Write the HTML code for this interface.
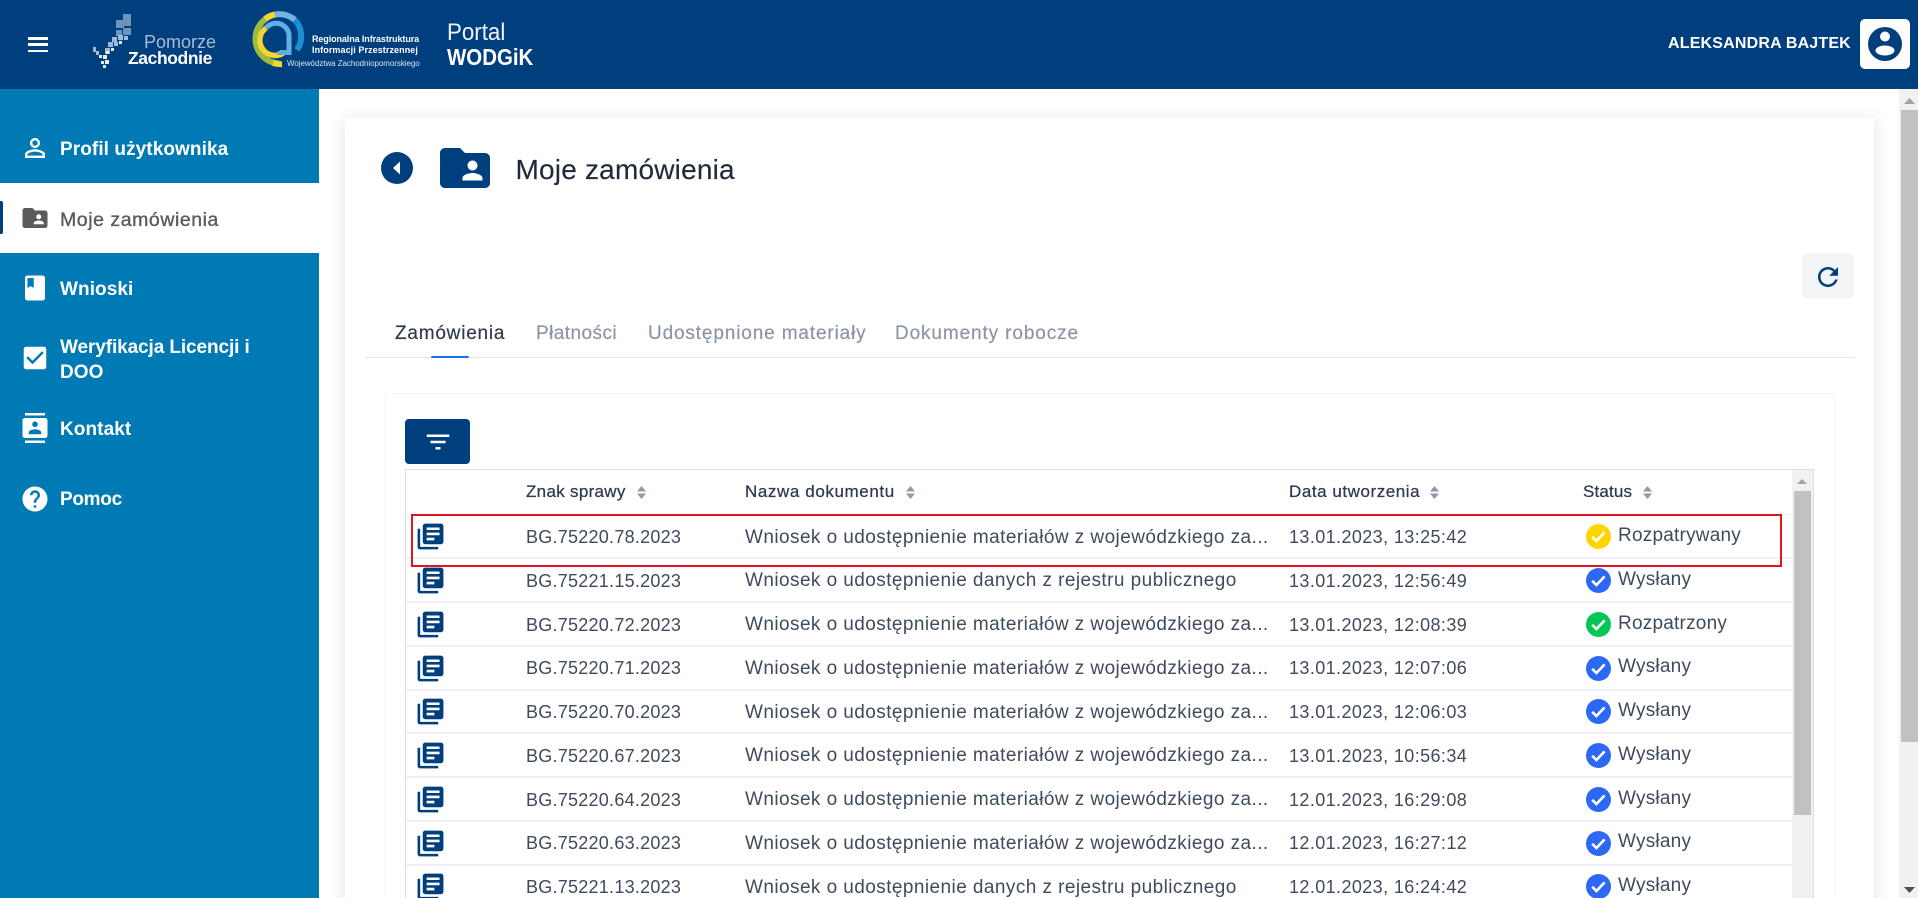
<!DOCTYPE html>
<html lang="pl"><head><meta charset="utf-8"><title>Moje zamówienia</title>
<style>
html,body{margin:0;padding:0;width:1918px;height:898px;overflow:hidden;background:#fff;font-family:"Liberation Sans",sans-serif}
#w{position:relative;width:1918px;height:898px;overflow:hidden;background:#fff}
.a{position:absolute;white-space:nowrap}
svg.a{display:block;overflow:visible}
.nav{left:60px;font-size:19px;font-weight:bold;color:#fff;line-height:24px;letter-spacing:.08px;margin-top:1.2px}
.tab{top:321.5px;font-size:19px;line-height:24px;color:#8b95a5;-webkit-text-stroke:.2px}
.th{top:481px;font-size:17px;line-height:22px;color:#2f3a4c;-webkit-text-stroke:.25px;letter-spacing:.3px}
.td{font-size:18px;line-height:24px;color:#3f4b5d}
.c1{left:526px;letter-spacing:.25px}
.c2{left:745px;letter-spacing:.43px;font-size:19px;margin-top:.5px}
.c3{left:1289px;letter-spacing:.4px}
.c4{left:1618px;letter-spacing:.22px;font-size:19px;margin-top:1px}
.ln{left:406px;width:1386px;height:2px;background:#eef0f5}
</style></head><body><div id="w">
<svg width="0" height="0" style="position:absolute"><defs>
<path id="lib" d="M4 6H2v14c0 1.1.9 2 2 2h14v-2H4V6zm16-4H8c-1.1 0-2 .9-2 2v12c0 1.1.9 2 2 2h12c1.1 0 2-.9 2-2V4c0-1.1-.9-2-2-2zm-1 9H9V9h10v2zm-4 4H9v-2h6v2zm4-8H9V5h10v2z"/>
<g id="sort"><path d="M0 5.5L4.5 0 9 5.5z M0 7.5h9L4.5 13z"/></g>
<g id="ok"><path d="M6.2 12.8l4.2 4.2 8.2-8.6" fill="none" stroke="#fff" stroke-width="2.6"/></g>
</defs></svg>

<!-- header -->
<div class="a" style="left:0;top:0;width:1918px;height:89px;background:#003f7d"></div>
<div class="a" style="left:28px;top:37px;width:20px;height:2.6px;background:#fff"></div>
<div class="a" style="left:28px;top:43px;width:20px;height:2.6px;background:#fff"></div>
<div class="a" style="left:28px;top:49.5px;width:20px;height:2.6px;background:#fff"></div>

<!-- Pomorze logo -->
<svg class="a" style="left:92px;top:11px" width="50" height="60" viewBox="0 0 50 60">
<g fill="#6f94bb"><rect x="24" y="9" width="8" height="8"/><rect x="31" y="3" width="8" height="12"/><rect x="31" y="17" width="8" height="7"/><rect x="24" y="19" width="6" height="6"/></g>
<g fill="#9fbad6"><rect x="20" y="26" width="5" height="5"/><rect x="26" y="24" width="5" height="5"/><rect x="32" y="25" width="4" height="4"/><rect x="16" y="31" width="5" height="5"/><rect x="22" y="31" width="4" height="4"/><rect x="13" y="37" width="5" height="6"/><rect x="1" y="36" width="3" height="5"/><rect x="4" y="40" width="3" height="4"/></g>
<g fill="#e6eef6"><rect x="11" y="44" width="4" height="4"/><rect x="14" y="40" width="3" height="3"/><rect x="19" y="37" width="3" height="3"/><rect x="7" y="44" width="3" height="3"/><rect x="13" y="49" width="4" height="4"/><rect x="9" y="50" width="3" height="3"/><rect x="11" y="54" width="3" height="3"/><rect x="27" y="30" width="3" height="3"/></g>
</svg>
<div class="a" style="left:144px;top:31px;font-size:18px;line-height:22px;color:#a8bcd2">Pomorze</div>
<div class="a" style="left:128px;top:47.7px;font-size:17.5px;line-height:21px;font-weight:bold;color:#fff;letter-spacing:-.4px">Zachodnie</div>

<!-- RIIP logo -->
<svg class="a" style="left:247.5px;top:8px" width="60" height="64" viewBox="0 0 60 64" fill="none">
<path d="M31 55.5A24.5 24.5 0 0 1 7.5 31 24.5 24.5 0 0 1 19 10" stroke="#9dbb3f" stroke-width="6"/>
<path d="M25 55A24.5 24.5 0 0 0 34 56" stroke="#f3d52f" stroke-width="6"/>
<path d="M17 11A24.5 24.5 0 0 1 27 6.5" stroke="#f3d52f" stroke-width="6"/>
<path d="M27 6.5A24.5 24.5 0 0 1 47 12" stroke="#6fb6e6" stroke-width="6"/>
<path d="M47 12A24.5 24.5 0 0 1 49 42" stroke="#1b8fd2" stroke-width="6"/>
<path d="M36 44.5A13 13 0 0 1 18 20" stroke="#f3d52f" stroke-width="5.5"/>
<path d="M18 20A13 13 0 0 1 41 27V44.5H32V43" stroke="#5fb0e6" stroke-width="5"/>
</svg>
<div class="a" style="left:312px;top:34px;font-size:9px;line-height:11px;font-weight:bold;color:#fff;letter-spacing:-.1px">Regionalna Infrastruktura</div>
<div class="a" style="left:312px;top:44.5px;font-size:9px;line-height:11px;font-weight:bold;color:#fff;letter-spacing:.08px">Informacji Przestrzennej</div>
<div class="a" style="left:287px;top:59px;font-size:8px;line-height:10px;color:#d5e3ef;letter-spacing:-.06px">Województwa Zachodniopomorskiego</div>
<div class="a" style="left:447px;top:20px;font-size:24px;line-height:26px;color:#f0f4f8;transform:scaleX(.93);transform-origin:0 0">Portal</div>
<div class="a" style="left:447px;top:43.5px;font-size:23.5px;line-height:26px;font-weight:bold;color:#fff;transform:scaleX(.87);transform-origin:0 0">WODGiK</div>

<div class="a" style="left:1668px;top:33px;font-size:16px;line-height:22px;font-weight:bold;color:#fff;letter-spacing:.18px">ALEKSANDRA BAJTEK</div>
<div class="a" style="left:1860px;top:19px;width:50px;height:50px;border-radius:5px;background:#fff"></div>
<svg class="a" style="left:1868px;top:27px" width="34" height="34" viewBox="0 0 34 34"><circle cx="17" cy="17" r="17" fill="#003f7d"/><circle cx="17" cy="9.5" r="5" fill="#fff"/><ellipse cx="17" cy="23.5" rx="9.5" ry="5" fill="#fff"/></svg>

<!-- sidebar -->
<div class="a" style="left:0;top:89px;width:319px;height:809px;background:#007ab5"></div>
<div class="a" style="left:0;top:183px;width:319px;height:70px;background:#fff"></div>
<div class="a" style="left:0;top:201px;width:3px;height:33px;background:#003f7d;border-radius:0 2px 2px 0"></div>

<svg class="a" style="left:20px;top:133px" width="30" height="30" viewBox="0 0 24 24" fill="#fff"><path d="M12 5.900c1.160 0 2.100.94 2.100 2.100s-.94 2.100-2.100 2.100S9.900 9.160 9.900 8s.94-2.100 2.100-2.100m0 9c2.970 0 6.100 1.460 6.100 2.100v1.100H5.900V17c0-.64 3.130-2.100 6.100-2.100M12 4C9.790 4 8 5.790 8 8s1.790 4 4 4 4-1.790 4-4-1.790-4-4-4zm0 9c-2.670 0-8 1.340-8 4v3h16v-3c0-2.660-5.330-4-8-4z"/></svg>
<div class="a nav" style="top:137px">Profil użytkownika</div>

<svg class="a" style="left:19.5px;top:203px" width="30" height="30" viewBox="0 0 24 24" fill="#5a5a5a"><path d="M20 6h-8l-2-2H4c-1.100 0-1.990.9-1.990 2L2 18c0 1.100.9 2 2 2h16c1.100 0 2-.9 2-2V8c0-1.100-.9-2-2-2zm-5 3c1.100 0 2 .9 2 2s-.9 2-2 2-2-.9-2-2 .9-2 2-2zm4 8h-8v-1c0-1.330 2.670-2 4-2s4 .67 4 2v1z"/></svg>
<div class="a nav" style="top:207px;color:#5a5a5a;font-weight:normal;font-size:19.5px;-webkit-text-stroke:.35px #5a5a5a;letter-spacing:.55px">Moje zamówienia</div>

<svg class="a" style="left:20px;top:272.5px" width="30" height="30" viewBox="0 0 24 24" fill="#fff"><path d="M18 2H6c-1.100 0-2 .9-2 2v16c0 1.100.9 2 2 2h12c1.100 0 2-.9 2-2V4c0-1.100-.9-2-2-2zM6 4h5v8l-2.500-1.500L6 12V4z"/></svg>
<div class="a nav" style="top:277px">Wnioski</div>

<svg class="a" style="left:20px;top:343px" width="30" height="30" viewBox="0 0 24 24" fill="#fff"><path d="M19 3H5c-1.110 0-2 .9-2 2v14c0 1.100.89 2 2 2h14c1.100 0 2-.9 2-2V5c0-1.100-.89-2-2-2zm-9 14l-5-5 1.410-1.410L10 14.170l7.590-7.590L19 8l-9 9z"/></svg>
<div class="a nav" style="top:335px;letter-spacing:-.1px">Weryfikacja Licencji i</div>
<div class="a nav" style="top:360px">DOO</div>

<svg class="a" style="left:19.8px;top:413px" width="30" height="30" viewBox="0 0 24 24" fill="#fff"><path d="M20 0H4v2h16V0zM4 24h16v-2H4v2zM20 4H4c-1.100 0-2 .9-2 2v12c0 1.100.9 2 2 2h16c1.100 0 2-.9 2-2V6c0-1.100-.9-2-2-2zm-8 2.750c1.240 0 2.250 1.010 2.250 2.250s-1.010 2.250-2.250 2.250S9.750 10.240 9.750 9 10.760 6.750 12 6.750zM17 17H7v-1.500c0-1.670 3.330-2.500 5-2.500s5 .83 5 2.500V17z"/></svg>
<div class="a nav" style="top:417px">Kontakt</div>

<svg class="a" style="left:20px;top:483.5px" width="30" height="30" viewBox="0 0 24 24" fill="#fff"><path d="M12 2C6.480 2 2 6.480 2 12s4.480 10 10 10 10-4.480 10-10S17.520 2 12 2zm1 17h-2v-2h2v2zm2.070-7.750l-.9.92C13.450 12.900 13 13.500 13 15h-2v-.5c0-1.100.45-2.100 1.170-2.830l1.240-1.260c.37-.36.59-.86.59-1.410 0-1.100-.9-2-2-2s-2 .9-2 2H8c0-2.210 1.790-4 4-4s4 1.790 4 4c0 .88-.36 1.680-.93 2.250z"/></svg>
<div class="a nav" style="top:487px;letter-spacing:-.3px">Pomoc</div>

<!-- page scrollbar -->
<div class="a" style="left:1899px;top:89px;width:19px;height:809px;background:#f1f1f1"></div>
<div class="a" style="left:1901px;top:110px;width:17px;height:632px;background:#c1c1c1"></div>
<svg class="a" style="left:1904px;top:98px" width="11" height="6"><path d="M0 6L5.5 0 11 6z" fill="#a3a3a3"/></svg>
<svg class="a" style="left:1904px;top:887px" width="11" height="6"><path d="M0 0h11L5.500 6z" fill="#505050"/></svg>

<!-- card -->
<div class="a" style="left:345px;top:118px;width:1529px;height:800px;background:#fff;box-shadow:0 3px 16px rgba(20,40,70,.14)"></div>

<svg class="a" style="left:381px;top:152px" width="32" height="32"><circle cx="16" cy="16" r="16" fill="#003f7d"/><path d="M19 9.5v13L12 16z" fill="#fff"/></svg>
<svg class="a" style="left:435px;top:138px" width="60" height="60" viewBox="0 0 24 24" fill="#003f7d"><path d="M20 6h-8l-2-2H4c-1.100 0-1.990.9-1.990 2L2 18c0 1.100.9 2 2 2h16c1.100 0 2-.9 2-2V8c0-1.100-.9-2-2-2zm-5 3c1.100 0 2 .9 2 2s-.9 2-2 2-2-.9-2-2 .9-2 2-2zm4 8h-8v-1c0-1.330 2.670-2 4-2s4 .67 4 2v1z"/></svg>
<div class="a" style="left:515.5px;top:153px;font-size:28px;line-height:34px;color:#1f2a3d;letter-spacing:.2px;-webkit-text-stroke:.15px">Moje zamówienia</div>

<div class="a" style="left:1802px;top:253px;width:52px;height:45px;border-radius:5px;background:#f3f4f6"></div>
<svg class="a" style="left:1813px;top:262px" width="30" height="30" viewBox="0 0 24 24" fill="#003f7d"><path d="M17.650 6.350C16.200 4.900 14.210 4 12 4c-4.420 0-7.990 3.580-7.990 8s3.570 8 7.990 8c3.730 0 6.840-2.550 7.730-6h-2.080c-.82 2.330-3.040 4-5.650 4-3.310 0-6-2.690-6-6s2.690-6 6-6c1.660 0 3.140.69 4.220 1.780L13 11h7V4l-2.350 2.350z"/></svg>

<!-- tabs -->
<div class="a tab" style="left:395px;color:#2f3a4c;letter-spacing:.78px">Zamówienia</div>
<div class="a tab" style="left:536px;letter-spacing:.44px">Płatności</div>
<div class="a tab" style="left:648px;letter-spacing:.86px">Udostępnione materiały</div>
<div class="a tab" style="left:895px;letter-spacing:.88px">Dokumenty robocze</div>
<div class="a" style="left:365px;top:357px;width:1489px;height:1px;background:#e3e6ea"></div>
<div class="a" style="left:431px;top:356px;width:38px;height:2px;background:#1a6fe8;border-radius:1px"></div>

<!-- inner card -->
<div class="a" style="left:384px;top:393px;width:1450px;height:520px;border:1px solid #f4f5f7;border-radius:3px"></div>
<div class="a" style="left:405px;top:419px;width:65px;height:45px;background:#003f7d;border-radius:4px"></div>
<svg class="a" style="left:423px;top:426.5px" width="30" height="30" viewBox="0 0 24 24" fill="#fff"><path d="M10 18h4v-2h-4v2zM3 6v2h18V6H3zm3 7h12v-2H6v2z"/></svg>

<!-- table frame -->
<div class="a" style="left:405px;top:469px;width:1407px;height:440px;border:1px solid #dcdfe3"></div>
<div class="a" style="left:1792px;top:470px;width:21px;height:428px;background:#f1f1f1"></div>
<div class="a" style="left:1794px;top:491px;width:17px;height:324px;background:#c1c1c1"></div>
<svg class="a" style="left:1797px;top:479px" width="10" height="5"><path d="M0 5L5 0l5 5z" fill="#a3a3a3"/></svg>

<!-- table head -->
<div class="a th" style="left:526px">Znak sprawy</div>
<svg class="a" style="left:637px;top:486px" width="9" height="13" fill="#8f99a8"><use href="#sort"/></svg>
<div class="a th" style="left:745px;letter-spacing:.6px">Nazwa dokumentu</div>
<svg class="a" style="left:906px;top:486px" width="9" height="13" fill="#8f99a8"><use href="#sort"/></svg>
<div class="a th" style="left:1289px;letter-spacing:.55px">Data utworzenia</div>
<svg class="a" style="left:1430px;top:486px" width="9" height="13" fill="#8f99a8"><use href="#sort"/></svg>
<div class="a th" style="left:1583px;letter-spacing:.15px">Status</div>
<svg class="a" style="left:1643px;top:486px" width="9" height="13" fill="#8f99a8"><use href="#sort"/></svg>

<!-- row lines -->
<div class="a ln" style="top:514px;height:1px"></div>
<div class="a ln" style="top:557px"></div>
<div class="a ln" style="top:601px"></div>
<div class="a ln" style="top:645px"></div>
<div class="a ln" style="top:689px"></div>
<div class="a ln" style="top:732px"></div>
<div class="a ln" style="top:776px"></div>
<div class="a ln" style="top:820px"></div>
<div class="a ln" style="top:864px"></div>

<!-- row 1 -->
<svg class="a" style="left:415.4px;top:521.4px" width="31" height="31" viewBox="0 0 24 24" fill="#003f7d"><use href="#lib"/></svg>
<div class="a td c1" style="top:525px">BG.75220.78.2023</div>
<div class="a td c2" style="top:525px">Wniosek o udostępnienie materiałów z wojewódzkiego za...</div>
<div class="a td c3" style="top:525px">13.01.2023, 13:25:42</div>
<svg class="a" style="left:1585.5px;top:524.2px" width="25" height="25" viewBox="0 0 25 25"><circle cx="12.5" cy="12.5" r="12.5" fill="#ffd500"/><use href="#ok"/></svg>
<div class="a td c4" style="top:523px">Rozpatrywany</div>

<!-- row 2 -->
<svg class="a" style="left:415.4px;top:565.2px" width="31" height="31" viewBox="0 0 24 24" fill="#003f7d"><use href="#lib"/></svg>
<div class="a td c1" style="top:568.8px">BG.75221.15.2023</div>
<div class="a td c2" style="top:568.8px">Wniosek o udostępnienie danych z rejestru publicznego</div>
<div class="a td c3" style="top:568.8px">13.01.2023, 12:56:49</div>
<svg class="a" style="left:1585.5px;top:568px" width="25" height="25" viewBox="0 0 25 25"><circle cx="12.5" cy="12.5" r="12.5" fill="#2d68f5"/><use href="#ok"/></svg>
<div class="a td c4" style="top:567px">Wysłany</div>

<!-- row 3 -->
<svg class="a" style="left:415.4px;top:608.9px" width="31" height="31" viewBox="0 0 24 24" fill="#003f7d"><use href="#lib"/></svg>
<div class="a td c1" style="top:612.5px">BG.75220.72.2023</div>
<div class="a td c2" style="top:612.5px">Wniosek o udostępnienie materiałów z wojewódzkiego za...</div>
<div class="a td c3" style="top:612.5px">13.01.2023, 12:08:39</div>
<svg class="a" style="left:1585.5px;top:611.7px" width="25" height="25" viewBox="0 0 25 25"><circle cx="12.5" cy="12.5" r="12.5" fill="#06c755"/><use href="#ok"/></svg>
<div class="a td c4" style="top:610.5px">Rozpatrzony</div>

<!-- row 4 -->
<svg class="a" style="left:415.4px;top:652.7px" width="31" height="31" viewBox="0 0 24 24" fill="#003f7d"><use href="#lib"/></svg>
<div class="a td c1" style="top:656.2px">BG.75220.71.2023</div>
<div class="a td c2" style="top:656.2px">Wniosek o udostępnienie materiałów z wojewódzkiego za...</div>
<div class="a td c3" style="top:656.2px">13.01.2023, 12:07:06</div>
<svg class="a" style="left:1585.5px;top:655.5px" width="25" height="25" viewBox="0 0 25 25"><circle cx="12.5" cy="12.5" r="12.5" fill="#2d68f5"/><use href="#ok"/></svg>
<div class="a td c4" style="top:654.2px">Wysłany</div>

<!-- row 5 -->
<svg class="a" style="left:415.4px;top:696.4px" width="31" height="31" viewBox="0 0 24 24" fill="#003f7d"><use href="#lib"/></svg>
<div class="a td c1" style="top:700px">BG.75220.70.2023</div>
<div class="a td c2" style="top:700px">Wniosek o udostępnienie materiałów z wojewódzkiego za...</div>
<div class="a td c3" style="top:700px">13.01.2023, 12:06:03</div>
<svg class="a" style="left:1585.5px;top:699.2px" width="25" height="25" viewBox="0 0 25 25"><circle cx="12.5" cy="12.5" r="12.5" fill="#2d68f5"/><use href="#ok"/></svg>
<div class="a td c4" style="top:698px">Wysłany</div>

<!-- row 6 -->
<svg class="a" style="left:415.4px;top:740.2px" width="31" height="31" viewBox="0 0 24 24" fill="#003f7d"><use href="#lib"/></svg>
<div class="a td c1" style="top:743.8px">BG.75220.67.2023</div>
<div class="a td c2" style="top:743.8px">Wniosek o udostępnienie materiałów z wojewódzkiego za...</div>
<div class="a td c3" style="top:743.8px">13.01.2023, 10:56:34</div>
<svg class="a" style="left:1585.5px;top:743px" width="25" height="25" viewBox="0 0 25 25"><circle cx="12.5" cy="12.5" r="12.5" fill="#2d68f5"/><use href="#ok"/></svg>
<div class="a td c4" style="top:741.7px">Wysłany</div>

<!-- row 7 -->
<svg class="a" style="left:415.4px;top:783.9px" width="31" height="31" viewBox="0 0 24 24" fill="#003f7d"><use href="#lib"/></svg>
<div class="a td c1" style="top:787.5px">BG.75220.64.2023</div>
<div class="a td c2" style="top:787.5px">Wniosek o udostępnienie materiałów z wojewódzkiego za...</div>
<div class="a td c3" style="top:787.5px">12.01.2023, 16:29:08</div>
<svg class="a" style="left:1585.5px;top:786.5px" width="25" height="25" viewBox="0 0 25 25"><circle cx="12.5" cy="12.5" r="12.5" fill="#2d68f5"/><use href="#ok"/></svg>
<div class="a td c4" style="top:785.5px">Wysłany</div>

<!-- row 8 -->
<svg class="a" style="left:415.4px;top:827.7px" width="31" height="31" viewBox="0 0 24 24" fill="#003f7d"><use href="#lib"/></svg>
<div class="a td c1" style="top:831.2px">BG.75220.63.2023</div>
<div class="a td c2" style="top:831.2px">Wniosek o udostępnienie materiałów z wojewódzkiego za...</div>
<div class="a td c3" style="top:831.2px">12.01.2023, 16:27:12</div>
<svg class="a" style="left:1585.5px;top:830.5px" width="25" height="25" viewBox="0 0 25 25"><circle cx="12.5" cy="12.5" r="12.5" fill="#2d68f5"/><use href="#ok"/></svg>
<div class="a td c4" style="top:829px">Wysłany</div>

<!-- row 9 -->
<svg class="a" style="left:415.4px;top:871.4px" width="31" height="31" viewBox="0 0 24 24" fill="#003f7d"><use href="#lib"/></svg>
<div class="a td c1" style="top:875px">BG.75221.13.2023</div>
<div class="a td c2" style="top:875px">Wniosek o udostępnienie danych z rejestru publicznego</div>
<div class="a td c3" style="top:875px">12.01.2023, 16:24:42</div>
<svg class="a" style="left:1585.5px;top:874.2px" width="25" height="25" viewBox="0 0 25 25"><circle cx="12.5" cy="12.5" r="12.5" fill="#2d68f5"/><use href="#ok"/></svg>
<div class="a td c4" style="top:873px">Wysłany</div>

<!-- red highlight -->
<div class="a" style="left:411px;top:514px;width:1367px;height:49px;border:2px solid #e3121f"></div>
</div></body></html>
